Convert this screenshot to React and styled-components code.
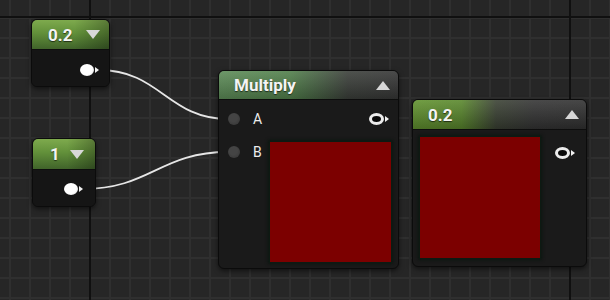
import styled, { createGlobalStyle } from "styled-components";

const GlobalStyle = createGlobalStyle`
  * { box-sizing: border-box; }
  body {
    margin: 0;
    background: #262626;
    font-family: Roboto, "Liberation Sans", sans-serif;
  }
`;

// minor grid every 20px, major lines only every 480px
const Canvas = styled.div`
  position: relative;
  width: 610px;
  height: 300px;
  overflow: hidden;
  background-color: #262626;
  background-image:
    linear-gradient(to right, #101010 2px, transparent 2px),
    linear-gradient(to bottom, #101010 2px, transparent 2px),
    linear-gradient(to right, #2f2f2f 2px, transparent 2px),
    linear-gradient(to bottom, #2f2f2f 2px, transparent 2px);
  background-size: 480px 480px, 480px 480px, 20px 20px, 20px 20px;
  background-position: 89px 16px, 89px 16px, 9px 17px, 9px 17px;
`;

const Wires = styled.svg`
  position: absolute;
  left: 0;
  top: 0;
  width: 610px;
  height: 300px;
`;

const Node = styled.div`
  position: absolute;
  left: ${(p) => p.$x}px;
  top: ${(p) => p.$y}px;
  width: ${(p) => p.$w}px;
  height: ${(p) => p.$h}px;
  display: flex;
  flex-direction: column;
  background: #1a1a1a;
  border: 1px solid #0b0b0b;
  border-radius: 6px;
  overflow: hidden;
  box-shadow: 0 2px 5px rgba(0, 0, 0, 0.55);
`;

const Header = styled.div`
  height: ${(p) => p.$h}px;
  flex: none;
  display: flex;
  align-items: center;
  justify-content: space-between;
  padding: 0 ${(p) => p.$pr}px 0 ${(p) => p.$pl}px;
  background: ${(p) => p.$bg};
  border-bottom: 1px solid #0d0d0d;
  color: #f4f4f4;
  font-size: 17px;
  font-weight: 700;
  text-shadow: 0 1px 1px rgba(0, 0, 0, 0.6);
`;

const Caret = styled.span`
  width: 0;
  height: 0;
  border-left: 7px solid transparent;
  border-right: 7px solid transparent;
  ${(p) =>
    p.$up
      ? "border-bottom: 9px solid #d8d8d8;"
      : "border-top: 9px solid #d8d8d8;"}
`;

const ConstBody = styled.div`
  flex: 1;
  display: flex;
  align-items: center;
  justify-content: flex-end;
  padding: ${(p) => p.$pt}px ${(p) => p.$pr}px 0 0;
  background: #151515;
`;

const PinWrap = styled.span`
  display: inline-flex;
  align-items: center;
`;

const Arrow = styled.span`
  width: 0;
  height: 0;
  margin-left: 1px;
  border-top: 3px solid transparent;
  border-bottom: 3px solid transparent;
  border-left: 4px solid ${(p) => p.$color || "#f2f2f2"};
`;

const Dot = styled.span`
  width: 14px;
  height: 12px;
  border-radius: 50%;
  background: radial-gradient(circle at 45% 40%, #ffffff 55%, #cfcfcf 100%);
`;

const Ring = styled.span`
  width: 15px;
  height: 12px;
  border-radius: 50%;
  border: 3px solid #ececec;
  background: #090909;
`;

const InPin = styled.span`
  width: 12px;
  height: 12px;
  border-radius: 50%;
  background: radial-gradient(circle at 45% 40%, #444444 40%, #333333 100%);
`;

const MulBody = styled.div`
  flex: 1;
  display: grid;
  grid-template-columns: 42px 1fr;
  grid-template-rows: 20px auto;
  row-gap: 13px;
  padding: 9px 7px 6px 9px;
`;

const InRow = styled.div`
  display: flex;
  align-items: center;
  align-self: start;
  height: 20px;
  gap: 13px;
  color: #ececec;
  font-size: 14px;
`;

const OutCell = styled.div`
  display: flex;
  align-items: center;
  justify-content: flex-end;
  padding-right: ${(p) => p.$pr || 0}px;
`;

const Preview = styled.div`
  width: ${(p) => p.$w}px;
  height: ${(p) => p.$h}px;
  background: #7c0000;
  box-shadow: 0 0 0 1px #0d1a12, 0 0 3px 2px rgba(6, 20, 12, 0.8);
`;

const ParamBody = styled.div`
  flex: 1;
  display: flex;
  align-items: flex-start;
  justify-content: space-between;
  padding: 7px 11px 8px 7px;
`;

const PinSlot = styled.div`
  margin-top: 7px;
`;

const greenConst =
  "linear-gradient(90deg, transparent 55%, rgba(0,0,0,0.28) 100%), linear-gradient(180deg, #7eaa4d 0%, #62903a 45%, #40632a 100%)";
const mulHead =
  "linear-gradient(180deg, rgba(255,255,255,0.10) 0%, rgba(0,0,0,0.22) 100%), linear-gradient(90deg, #5d8c58 0%, #517f4b 40%, #3b3f3a 72%, #363636 100%)";
const paramHead =
  "linear-gradient(180deg, rgba(255,255,255,0.10) 0%, rgba(0,0,0,0.25) 100%), linear-gradient(90deg, #62932f 0%, #5a882d 28%, #3b4234 48%, #353535 70%, #323232 100%)";

const WhitePin = () => (
  <PinWrap>
    <Dot />
    <Arrow />
  </PinWrap>
);

const RingPin = () => (
  <PinWrap>
    <Ring />
    <Arrow />
  </PinWrap>
);

const Input = ({ label }) => (
  <InRow>
    <InPin />
    {label}
  </InRow>
);

const App = () => {
  return (
    <>
      <GlobalStyle />
      <Canvas>
        <Wires viewBox="0 0 610 300">
          <path
            d="M99 70 C160 70, 168 119, 228 119"
            stroke="#e6e6e6"
            strokeWidth="1.8"
            fill="none"
          />
          <path
            d="M83 189 C150 189, 160 152, 228 152"
            stroke="#e6e6e6"
            strokeWidth="1.8"
            fill="none"
          />
        </Wires>

        <Node $x={31} $y={19} $w={79} $h={68}>
          <Header $h={30} $pl={16} $pr={9} $bg={greenConst}>
            <span>0.2</span>
            <Caret />
          </Header>
          <ConstBody $pt={4} $pr={10}>
            <WhitePin />
          </ConstBody>
        </Node>

        <Node $x={32} $y={138} $w={64} $h={69}>
          <Header $h={31} $pl={17} $pr={11} $bg={greenConst}>
            <span>1</span>
            <Caret />
          </Header>
          <ConstBody $pt={2} $pr={12}>
            <WhitePin />
          </ConstBody>
        </Node>

        <Node $x={218} $y={70} $w={181} $h={199}>
          <Header $h={29} $pl={15} $pr={8} $bg={mulHead}>
            <span>Multiply</span>
            <Caret $up />
          </Header>
          <MulBody>
            <Input label="A" />
            <OutCell $pr={2}>
              <RingPin />
            </OutCell>
            <Input label="B" />
            <Preview $w={121} $h={120} />
          </MulBody>
        </Node>

        <Node $x={412} $y={99} $w={175} $h={168}>
          <Header $h={30} $pl={15} $pr={7} $bg={paramHead}>
            <span>0.2</span>
            <Caret $up />
          </Header>
          <ParamBody>
            <Preview $w={120} $h={121} />
            <PinSlot>
              <RingPin />
            </PinSlot>
          </ParamBody>
        </Node>
      </Canvas>
    </>
  );
};

export default App;
